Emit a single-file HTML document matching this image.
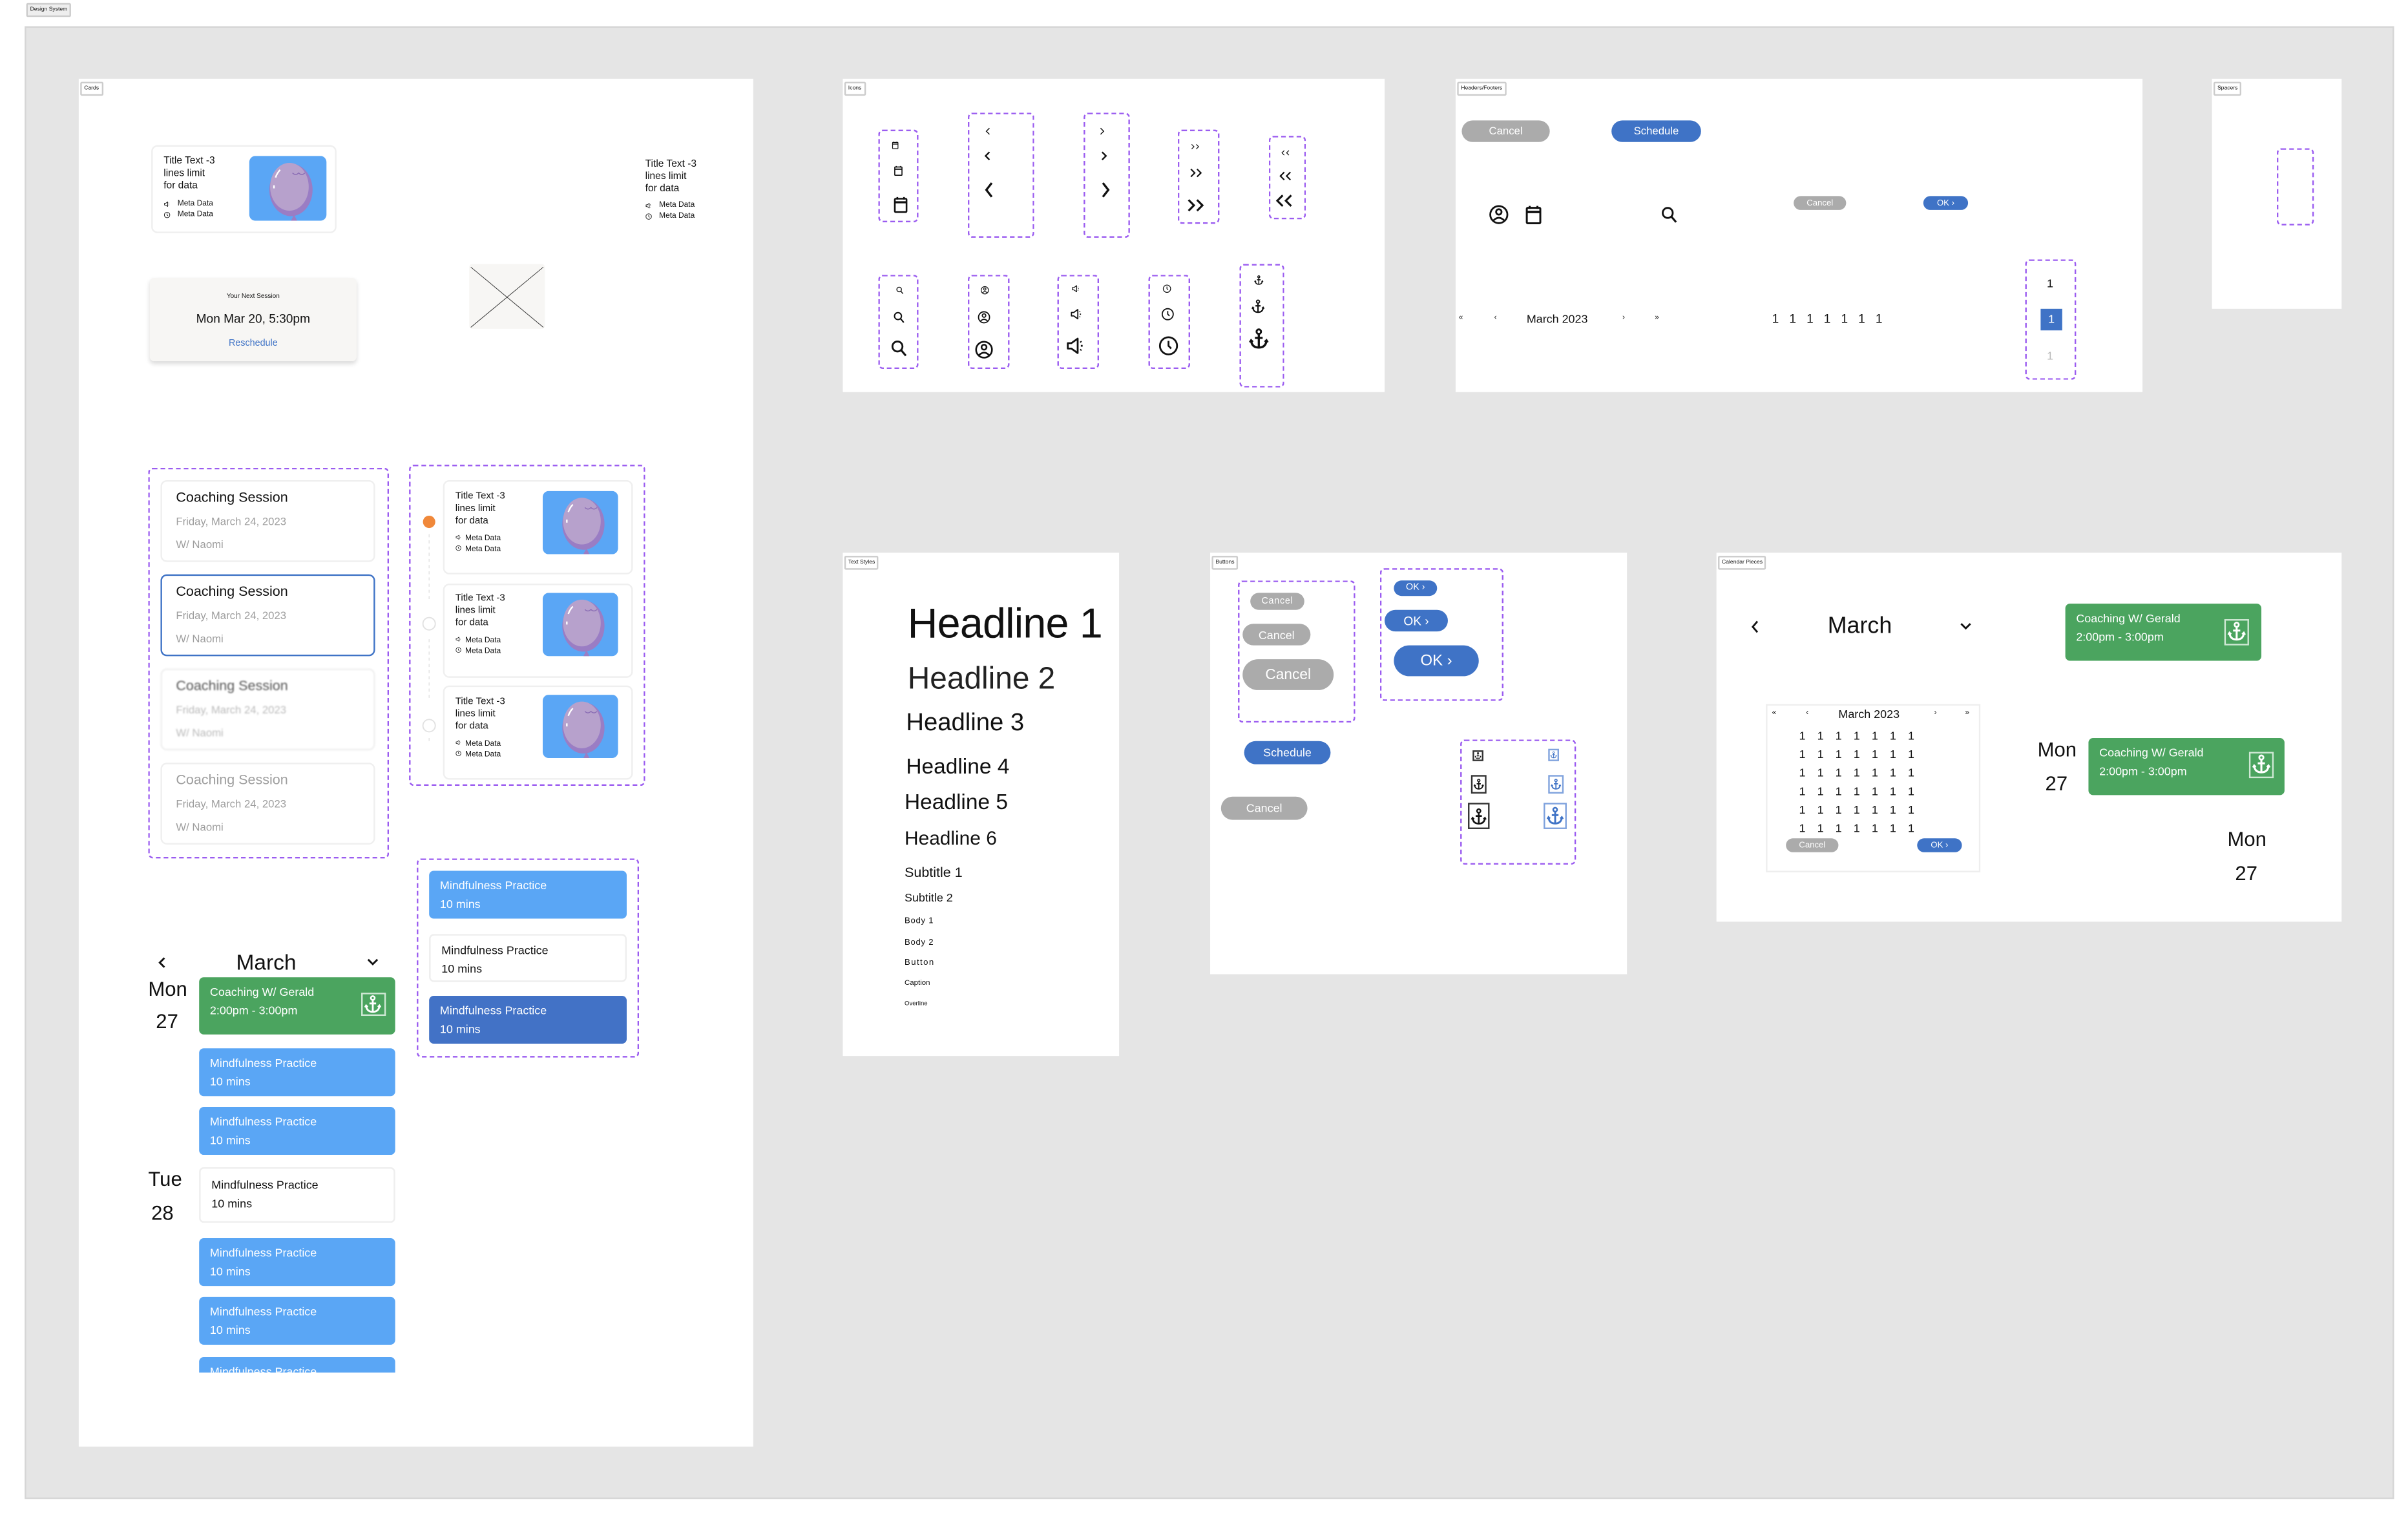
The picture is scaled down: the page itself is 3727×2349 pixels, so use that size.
<!DOCTYPE html>
<html><head><meta charset="utf-8">
<style>
*{box-sizing:border-box;margin:0;padding:0}
html,body{width:3727px;height:2349px;overflow:hidden;background:#fff}
#s{position:absolute;left:0;top:0;width:1560px;height:983px;transform:scale(2.3891);transform-origin:0 0;font-family:"Liberation Sans",sans-serif;color:#111}
.a{position:absolute;white-space:nowrap;line-height:1}
.p{position:absolute;background:#fff}
.d{position:absolute;border:0.8px dashed #9b5cf0;border-radius:3px}
.lab{position:absolute;font-size:3.6px;padding:1.5px 1.5px;border:0.4px solid #ccc;background:#fff;border-radius:1px;line-height:1}
.pill{position:absolute;border-radius:20px;color:#fff;text-align:center;white-space:nowrap;display:flex;align-items:center;justify-content:center}
.g{background:#ababab}.b{background:#3f73c6}
.card{position:absolute;background:#fff;border:0.6px solid #efefef;border-radius:4px}
.mp{position:absolute;border-radius:3px;font-size:7.5px;line-height:12px;padding:4px 7px;color:#fff;background:#5aa6f5;overflow:hidden}
.gr{position:absolute;background:#4ba45f;border-radius:3px;color:#fff;font-size:7.5px;line-height:12px;padding:4px 7px}
svg{position:absolute;overflow:visible}
</style></head><body>
<svg width="0" height="0" style="position:absolute">
<defs>
<symbol id="cal" viewBox="0 0 24 24"><rect x="5" y="5" width="14" height="16" rx="1" fill="none" stroke="currentColor" stroke-width="2"/><rect x="5" y="8" width="14" height="2.5" fill="currentColor"/><path d="M8 3v3M16 3v3" stroke="currentColor" stroke-width="2"/></symbol>
<symbol id="srch" viewBox="0 0 24 24"><circle cx="10" cy="10" r="6" fill="none" stroke="currentColor" stroke-width="2.2"/><path d="M14.5 14.5L20 21" stroke="currentColor" stroke-width="2.4"/></symbol>
<symbol id="usr" viewBox="0 0 24 24"><circle cx="12" cy="12" r="9.5" fill="none" stroke="currentColor" stroke-width="2"/><circle cx="12" cy="9" r="3" fill="none" stroke="currentColor" stroke-width="2"/><path d="M6 18.5Q12 12.5 18 18.5" fill="none" stroke="currentColor" stroke-width="2"/></symbol>
<symbol id="spk" viewBox="0 0 24 24"><path d="M3 9h4l7-5v16l-7-5H3z" fill="none" stroke="currentColor" stroke-width="2" stroke-linejoin="round"/><path d="M17 7l1 1M17.5 12h2M17 17l1-1" stroke="currentColor" stroke-width="2"/></symbol>
<symbol id="clk" viewBox="0 0 24 24"><circle cx="12" cy="12" r="9.5" fill="none" stroke="currentColor" stroke-width="2"/><path d="M12 6.5v5.5l3 3" fill="none" stroke="currentColor" stroke-width="2"/></symbol>
<symbol id="anc" viewBox="0 0 24 24"><circle cx="12" cy="4.5" r="2.3" fill="none" stroke="currentColor" stroke-width="2"/><path d="M12 7v14M8 11h8M4 14Q5 21 12 21Q19 21 20 14" fill="none" stroke="currentColor" stroke-width="2.2"/><path d="M2.5 15.5L4 13l2 2M21.5 15.5L20 13l-2 2" fill="none" stroke="currentColor" stroke-width="1.6"/></symbol>
<symbol id="bal" viewBox="0 0 50 42"><rect width="50" height="42" rx="4" fill="#5aa6f5"/><ellipse cx="27" cy="22" rx="14" ry="17" fill="#9a7dc4"/><ellipse cx="26" cy="20" rx="12.5" ry="15.5" fill="#b7a1cc"/><path d="M29 38l-2 4h4z" fill="#9a7dc4"/><path d="M17 14q1-3 3-5M16 19v2" stroke="#fff" stroke-width="1" fill="none"/><path d="M28 11q2 2 4 0q2 2 4 0" stroke="#8a6db4" stroke-width="0.6" fill="none"/></symbol>
</defs></svg>

<div id="s">
<div class="lab" style="left:17px;top:2px;background:#eee;border-color:#ccc">Design System</div>
<div class="p" style="left:16px;top:17px;width:1535px;height:954px;background:#e5e5e5;border:0.5px solid #d6d6d6"></div>

<!-- CARDS -->
<div class="p" style="left:51px;top:51px;width:437px;height:886px"></div>
<div class="lab" style="left:52px;top:53px">Cards</div>

<div class="card" style="left:98px;top:94px;width:120px;height:57px"></div>
<div class="a" style="left:106px;top:101px;font-size:6.5px;line-height:8.2px;white-space:normal;width:50px">Title Text -3<br>lines limit<br>for data</div>
<svg style="left:106px;top:130px" width="4.5" height="4.5" color="#111"><use href="#spk"/></svg>
<div class="a" style="left:115px;top:130px;font-size:5px">Meta Data</div>
<svg style="left:106px;top:136.5px" width="4.5" height="4.5" color="#111"><use href="#clk"/></svg>
<div class="a" style="left:115px;top:137px;font-size:5px">Meta Data</div>
<svg style="left:161px;top:101px" width="51" height="42"><use href="#bal"/></svg>

<div class="a" style="left:418px;top:103px;font-size:6.5px;line-height:8.2px">Title Text -3<br>lines limit<br>for data</div>
<svg style="left:418px;top:131px" width="4.5" height="4.5" color="#111"><use href="#spk"/></svg>
<div class="a" style="left:427px;top:131px;font-size:5px">Meta Data</div>
<svg style="left:418px;top:137.5px" width="4.5" height="4.5" color="#111"><use href="#clk"/></svg>
<div class="a" style="left:427px;top:138px;font-size:5px">Meta Data</div>

<div class="a" style="left:97px;top:180px;width:134px;height:54px;background:#f7f6f4;border-radius:3px;box-shadow:0 1.5px 3px rgba(0,0,0,.15)"></div>
<div class="a" style="left:97px;top:189.5px;width:134px;text-align:center;font-size:4.2px">Your Next Session</div>
<div class="a" style="left:97px;top:202.5px;width:134px;text-align:center;font-size:8px">Mon Mar 20, 5:30pm</div>
<div class="a" style="left:97px;top:219.5px;width:134px;text-align:center;font-size:6px;color:#3f73c6">Reschedule</div>

<div class="a" style="left:304px;top:171px;width:49px;height:42px;background:#f7f6f4;border-radius:2px"></div>
<svg style="left:304px;top:171px" width="49" height="42"><path d="M1 2L48 41M48 2L1 41" stroke="#333" stroke-width="0.4"/></svg>

<!-- session list -->
<div class="d" style="left:96px;top:303px;width:156px;height:253px"></div>
<div class="card" style="left:104px;top:311px;width:139px;height:53px"></div>
<div class="a" style="left:114px;top:318px;font-size:9px">Coaching Session</div>
<div class="a" style="left:114px;top:335px;font-size:7px;color:#9e9e9e">Friday, March 24, 2023</div>
<div class="a" style="left:114px;top:350px;font-size:7px;color:#9e9e9e">W/ Naomi</div>
<div class="card" style="left:104px;top:372px;width:139px;height:53px;border:1.1px solid #3f73c6"></div>
<div class="a" style="left:114px;top:379px;font-size:9px">Coaching Session</div>
<div class="a" style="left:114px;top:396px;font-size:7px;color:#9e9e9e">Friday, March 24, 2023</div>
<div class="a" style="left:114px;top:411px;font-size:7px;color:#9e9e9e">W/ Naomi</div>
<div class="card" style="left:104px;top:433px;width:139px;height:53px;filter:blur(0.5px)"></div>
<div class="a" style="left:114px;top:440px;font-size:9px;color:#555;filter:blur(0.4px)">Coaching Session</div>
<div class="a" style="left:114px;top:457px;font-size:7px;color:#bbb;filter:blur(0.4px)">Friday, March 24, 2023</div>
<div class="a" style="left:114px;top:472px;font-size:7px;color:#bbb;filter:blur(0.4px)">W/ Naomi</div>
<div class="card" style="left:104px;top:494px;width:139px;height:53px"></div>
<div class="a" style="left:114px;top:501px;font-size:9px;color:#9e9e9e">Coaching Session</div>
<div class="a" style="left:114px;top:518px;font-size:7px;color:#9e9e9e">Friday, March 24, 2023</div>
<div class="a" style="left:114px;top:533px;font-size:7px;color:#9e9e9e">W/ Naomi</div>

<!-- timeline -->
<div class="d" style="left:265px;top:301px;width:153px;height:208px"></div>
<svg style="left:270px;top:300px" width="20" height="210"><path d="M8 46V88M8 114V154M8 180V176" stroke="#ddd" stroke-width="0.5" stroke-dasharray="2 2"/><circle cx="8" cy="38" r="4" fill="#f0883a"/><circle cx="8" cy="104" r="4" fill="#fff" stroke="#e2e2e2" stroke-width="0.8"/><circle cx="8" cy="170" r="4" fill="#fff" stroke="#e2e2e2" stroke-width="0.8"/></svg>
<div class="card" style="left:287px;top:311px;width:123px;height:61px"></div>
<div class="card" style="left:287px;top:378px;width:123px;height:61px"></div>
<div class="card" style="left:287px;top:444px;width:123px;height:61px"></div>
<div class="a" style="left:295px;top:318px;font-size:6.3px;line-height:8px">Title Text -3<br>lines limit<br>for data</div>
<div class="a" style="left:295px;top:384px;font-size:6.3px;line-height:8px">Title Text -3<br>lines limit<br>for data</div>
<div class="a" style="left:295px;top:451px;font-size:6.3px;line-height:8px">Title Text -3<br>lines limit<br>for data</div>
<div class="a" style="left:295px;top:346px;font-size:5px;line-height:6.5px">&#x2003; Meta Data<br>&#x2003; Meta Data</div>
<div class="a" style="left:295px;top:412px;font-size:5px;line-height:6.5px">&#x2003; Meta Data<br>&#x2003; Meta Data</div>
<div class="a" style="left:295px;top:479px;font-size:5px;line-height:6.5px">&#x2003; Meta Data<br>&#x2003; Meta Data</div>
<svg style="left:295px;top:346px" width="4" height="4"><use href="#spk"/></svg><svg style="left:295px;top:352.5px" width="4" height="4"><use href="#clk"/></svg>
<svg style="left:295px;top:412px" width="4" height="4"><use href="#spk"/></svg><svg style="left:295px;top:418.5px" width="4" height="4"><use href="#clk"/></svg>
<svg style="left:295px;top:479px" width="4" height="4"><use href="#spk"/></svg><svg style="left:295px;top:485.5px" width="4" height="4"><use href="#clk"/></svg>
<svg style="left:351px;top:318px" width="50" height="41"><use href="#bal"/></svg>
<svg style="left:351px;top:384px" width="50" height="41"><use href="#bal"/></svg>
<svg style="left:351px;top:450px" width="50" height="41"><use href="#bal"/></svg>

<!-- mindfulness -->
<div class="d" style="left:270px;top:556px;width:144px;height:129px"></div>
<div class="mp" style="left:278px;top:564px;width:128px;height:31px">Mindfulness Practice<br>10 mins</div>
<div class="mp" style="left:278px;top:605px;width:128px;height:31px;background:#fff;color:#111;border:0.6px solid #eee">Mindfulness Practice<br>10 mins</div>
<div class="mp" style="left:278px;top:645px;width:128px;height:31px;background:#4272c6">Mindfulness Practice<br>10 mins</div>

<!-- calendar list -->
<svg style="left:101px;top:619px" width="8" height="8"><path d="M5.5 1.5L2.5 4.5L5.5 7.5" fill="none" stroke="#111" stroke-width="1.2"/></svg>
<div class="a" style="left:153px;top:616px;font-size:14px">March</div>
<svg style="left:237px;top:619px" width="9" height="8"><path d="M1.5 2.5L4.5 5.5L7.5 2.5" fill="none" stroke="#111" stroke-width="1.2"/></svg>
<div class="a" style="left:96px;top:634px;font-size:13px">Mon</div>
<div class="a" style="left:101px;top:655px;font-size:13px">27</div>
<div class="gr" style="left:129px;top:633px;width:127px;height:37px">Coaching W/ Gerald<br>2:00pm - 3:00pm</div>
<div class="a" style="left:234px;top:643px;width:16px;height:15px;border:0.5px solid #cfe8d4"></div>
<svg style="left:235px;top:644px" width="13" height="13" color="#fff"><use href="#anc"/></svg>
<div class="mp" style="left:129px;top:679px;width:127px;height:31px">Mindfulness Practice<br>10 mins</div>
<div class="mp" style="left:129px;top:717px;width:127px;height:31px">Mindfulness Practice<br>10 mins</div>
<div class="a" style="left:96px;top:757px;font-size:13px">Tue</div>
<div class="a" style="left:98px;top:779px;font-size:13px">28</div>
<div class="mp" style="left:129px;top:756px;width:127px;height:36px;background:#fff;color:#111;border:0.6px solid #eee;padding-top:5px">Mindfulness Practice<br>10 mins</div>
<div class="mp" style="left:129px;top:802px;width:127px;height:31px">Mindfulness Practice<br>10 mins</div>
<div class="mp" style="left:129px;top:840px;width:127px;height:31px">Mindfulness Practice<br>10 mins</div>
<div class="mp" style="left:129px;top:879px;width:127px;height:10px;border-radius:3px 3px 0 0">Mindfulness Practice</div>

<!-- ICONS -->
<div class="p" style="left:546px;top:51px;width:351px;height:203px"></div>
<div class="lab" style="left:547px;top:53px">Icons</div>
<div class="d" style="left:569px;top:84px;width:26px;height:60px"></div>
<svg style="left:577px;top:91px" width="6" height="6"><use href="#cal"/></svg>
<svg style="left:578px;top:106px" width="8" height="9"><use href="#cal"/></svg>
<svg style="left:577px;top:125px" width="13" height="15"><use href="#cal"/></svg>
<div class="d" style="left:627px;top:73px;width:43px;height:81px"></div>
<svg style="left:637px;top:82px" width="6" height="6"><path d="M4 1L2 3L4 5" fill="none" stroke="#111" stroke-width=".6"/></svg>
<svg style="left:636px;top:97px" width="8" height="8"><path d="M5 1.5L2.5 4L5 6.5" fill="none" stroke="#111" stroke-width="1"/></svg>
<svg style="left:636px;top:117px" width="10" height="12"><path d="M6.5 1.5L3 6L6.5 10.5" fill="none" stroke="#111" stroke-width="1.4"/></svg>
<div class="d" style="left:702px;top:73px;width:30px;height:81px"></div>
<svg style="left:711px;top:82px" width="6" height="6"><path d="M2 1L4 3L2 5" fill="none" stroke="#111" stroke-width=".6"/></svg>
<svg style="left:711px;top:97px" width="8" height="8"><path d="M3 1.5L5.5 4L3 6.5" fill="none" stroke="#111" stroke-width="1"/></svg>
<svg style="left:711px;top:117px" width="10" height="12"><path d="M3.5 1.5L7 6L3.5 10.5" fill="none" stroke="#111" stroke-width="1.4"/></svg>
<div class="d" style="left:763px;top:84px;width:27px;height:61px"></div>
<svg style="left:771px;top:92px" width="8" height="6"><path d="M1 1.5L2.5 3L1 4.5M4 1.5L5.5 3L4 4.5" fill="none" stroke="#111" stroke-width=".5"/></svg>
<svg style="left:770px;top:108px" width="10" height="8"><path d="M1.5 1.5L4 4L1.5 6.5M5.5 1.5L8 4L5.5 6.5" fill="none" stroke="#111" stroke-width=".9"/></svg>
<svg style="left:768px;top:128px" width="14" height="10"><path d="M2 1.5L5.5 5L2 8.5M7.5 1.5L11 5L7.5 8.5" fill="none" stroke="#111" stroke-width="1.3"/></svg>
<div class="d" style="left:822px;top:88px;width:24px;height:54px"></div>
<svg style="left:829px;top:96px" width="8" height="6"><path d="M3 1.5L1.5 3L3 4.5M6 1.5L4.5 3L6 4.5" fill="none" stroke="#111" stroke-width=".5"/></svg>
<svg style="left:828px;top:110px" width="10" height="8"><path d="M4 1.5L1.5 4L4 6.5M8 1.5L5.5 4L8 6.5" fill="none" stroke="#111" stroke-width=".9"/></svg>
<svg style="left:826px;top:125px" width="14" height="10"><path d="M5 1.5L1.5 5L5 8.5M10.5 1.5L7 5L10.5 8.5" fill="none" stroke="#111" stroke-width="1.3"/></svg>
<div class="d" style="left:569px;top:178px;width:26px;height:61px"></div>
<svg style="left:580px;top:185px" width="6" height="6"><use href="#srch"/></svg>
<svg style="left:578px;top:201px" width="9" height="9"><use href="#srch"/></svg>
<svg style="left:576px;top:219px" width="13" height="13"><use href="#srch"/></svg>
<div class="d" style="left:627px;top:178px;width:27px;height:61px"></div>
<svg style="left:635px;top:185px" width="6" height="6"><use href="#usr"/></svg>
<svg style="left:633px;top:201px" width="9" height="9"><use href="#usr"/></svg>
<svg style="left:631px;top:220px" width="13" height="13"><use href="#usr"/></svg>
<div class="d" style="left:685px;top:178px;width:27px;height:61px"></div>
<svg style="left:694px;top:184px" width="6" height="6"><use href="#spk"/></svg>
<svg style="left:693px;top:199px" width="9" height="9"><use href="#spk"/></svg>
<svg style="left:690px;top:217px" width="14" height="14"><use href="#spk"/></svg>
<div class="d" style="left:744px;top:178px;width:27px;height:61px"></div>
<svg style="left:753px;top:184px" width="6" height="6"><use href="#clk"/></svg>
<svg style="left:752px;top:199px" width="9" height="9"><use href="#clk"/></svg>
<svg style="left:750px;top:217px" width="14" height="14"><use href="#clk"/></svg>
<div class="d" style="left:803px;top:171px;width:29px;height:80px"></div>
<svg style="left:812px;top:178px" width="7" height="7"><use href="#anc"/></svg>
<svg style="left:810px;top:193px" width="10" height="11"><use href="#anc"/></svg>
<svg style="left:808px;top:212px" width="15" height="15"><use href="#anc"/></svg>

<!-- HEADERS/FOOTERS -->
<div class="p" style="left:943px;top:51px;width:445px;height:203px"></div>
<div class="lab" style="left:944px;top:53px">Headers/Footers</div>
<div class="pill g" style="left:947px;top:78px;width:57px;height:14px;font-size:7px">Cancel</div>
<div class="pill b" style="left:1044px;top:78px;width:58px;height:14px;font-size:7px">Schedule</div>
<svg style="left:964px;top:132px" width="14" height="14"><use href="#usr"/></svg>
<svg style="left:986px;top:131px" width="15" height="16"><use href="#cal"/></svg>
<svg style="left:1075px;top:132px" width="13" height="14"><use href="#srch"/></svg>
<div class="pill g" style="left:1162px;top:127px;width:34px;height:9px;font-size:5.5px">Cancel</div>
<div class="pill b" style="left:1246px;top:127px;width:29px;height:9px;font-size:5.5px">OK ›</div>
<div class="a" style="left:945px;top:204px;font-size:5px">«</div>
<div class="a" style="left:968px;top:204px;font-size:5px">‹</div>
<div class="a" style="left:989px;top:203px;font-size:7.5px">March 2023</div>
<div class="a" style="left:1051px;top:204px;font-size:5px">›</div>
<div class="a" style="left:1072px;top:204px;font-size:5px">»</div>
<div class="a" style="left:1148px;top:203px;font-size:8px;word-spacing:4.5px">1 1 1 1 1 1 1</div>
<div class="d" style="left:1312px;top:168px;width:33px;height:78px"></div>
<div class="a" style="left:1326px;top:180px;font-size:7.5px">1</div>
<div class="a" style="left:1322px;top:200px;width:14px;height:14px;background:#3f73c6;color:#fff;font-size:7.5px;text-align:center;line-height:14px">1</div>
<div class="a" style="left:1326px;top:227px;font-size:7.5px;color:#bbb">1</div>

<!-- SPACERS -->
<div class="p" style="left:1433px;top:51px;width:84px;height:149px"></div>
<div class="lab" style="left:1434px;top:53px">Spacers</div>
<div class="d" style="left:1475px;top:96px;width:24px;height:50px"></div>

<!-- TEXT STYLES -->
<div class="p" style="left:546px;top:358px;width:179px;height:326px"></div>
<div class="lab" style="left:547px;top:360px">Text Styles</div>
<div class="a" style="left:588px;top:391px;font-size:27px;font-weight:300;letter-spacing:-0.3px">Headline 1</div>
<div class="a" style="left:588px;top:430px;font-size:20px;color:#222">Headline 2</div>
<div class="a" style="left:587px;top:461px;font-size:16px">Headline 3</div>
<div class="a" style="left:587px;top:489px;font-size:14px">Headline 4</div>
<div class="a" style="left:586px;top:512px;font-size:14px">Headline 5</div>
<div class="a" style="left:586px;top:537px;font-size:12.5px">Headline 6</div>
<div class="a" style="left:586px;top:560.5px;font-size:9px">Subtitle 1</div>
<div class="a" style="left:586px;top:577.5px;font-size:7.5px">Subtitle 2</div>
<div class="a" style="left:586px;top:595px;font-size:5.5px;letter-spacing:.3px">Body 1</div>
<div class="a" style="left:586px;top:609px;font-size:5.5px;letter-spacing:.3px">Body 2</div>
<div class="a" style="left:586px;top:622px;font-size:5.5px;letter-spacing:.6px">Button</div>
<div class="a" style="left:586px;top:635.5px;font-size:4.8px">Caption</div>
<div class="a" style="left:586px;top:648px;font-size:4px">Overline</div>

<!-- BUTTONS -->
<div class="p" style="left:784px;top:358px;width:270px;height:273px"></div>
<div class="lab" style="left:785px;top:360px">Buttons</div>
<div class="d" style="left:802px;top:376px;width:76px;height:92px"></div>
<div class="pill g" style="left:810px;top:384px;width:35px;height:11px;font-size:6px;letter-spacing:.3px">Cancel</div>
<div class="pill g" style="left:805px;top:404px;width:44px;height:14px;font-size:7.5px">Cancel</div>
<div class="pill g" style="left:805px;top:427px;width:59px;height:20px;font-size:9.5px">Cancel</div>
<div class="d" style="left:894px;top:368px;width:80px;height:86px"></div>
<div class="pill b" style="left:903px;top:376px;width:28px;height:10px;font-size:6px">OK ›</div>
<div class="pill b" style="left:897px;top:395px;width:41px;height:14px;font-size:8px">OK ›</div>
<div class="pill b" style="left:903px;top:418px;width:55px;height:20px;font-size:10px">OK ›</div>
<div class="pill b" style="left:806px;top:480px;width:56px;height:15px;font-size:7.5px">Schedule</div>
<div class="pill g" style="left:791px;top:516px;width:56px;height:15px;font-size:7.5px">Cancel</div>
<div class="d" style="left:946px;top:479px;width:75px;height:81px"></div>
<div class="a" style="left:954px;top:486px;width:7px;height:7px;border:0.4px solid #333"></div><svg style="left:955px;top:487px" width="5" height="5"><use href="#anc"/></svg>
<div class="a" style="left:953px;top:502px;width:10px;height:12px;border:0.4px solid #333"></div><svg style="left:954px;top:503px" width="8" height="10"><use href="#anc"/></svg>
<div class="a" style="left:951px;top:520px;width:14px;height:17px;border:0.4px solid #333"></div><svg style="left:952px;top:522px" width="12" height="14"><use href="#anc"/></svg>
<div class="a" style="left:1003px;top:485px;width:7px;height:8px;border:0.4px solid #7fa2dd"></div><svg style="left:1004px;top:486px" width="5" height="6" color="#3f73c6"><use href="#anc"/></svg>
<div class="a" style="left:1003px;top:502px;width:10px;height:12px;border:0.4px solid #7fa2dd"></div><svg style="left:1004px;top:503px" width="8" height="10" color="#3f73c6"><use href="#anc"/></svg>
<div class="a" style="left:1000px;top:520px;width:15px;height:17px;border:0.4px solid #7fa2dd"></div><svg style="left:1001px;top:521px" width="13" height="15" color="#3f73c6"><use href="#anc"/></svg>

<!-- CALENDAR PIECES -->
<div class="p" style="left:1112px;top:358px;width:405px;height:239px"></div>
<div class="lab" style="left:1113px;top:360px">Calendar Pieces</div>
<svg style="left:1133px;top:401px" width="8" height="10"><path d="M5.5 1.5L2.5 5L5.5 8.5" fill="none" stroke="#111" stroke-width="1.2"/></svg>
<div class="a" style="left:1184px;top:398px;font-size:15px">March</div>
<svg style="left:1269px;top:402px" width="9" height="8"><path d="M1.5 2L4.5 5L7.5 2" fill="none" stroke="#111" stroke-width="1.2"/></svg>
<div class="gr" style="left:1338px;top:391px;width:127px;height:37px">Coaching W/ Gerald<br>2:00pm - 3:00pm</div>
<div class="a" style="left:1441px;top:401px;width:16px;height:17px;border:0.5px solid #cfe8d4"></div>
<svg style="left:1442px;top:402px" width="14" height="14" color="#fff"><use href="#anc"/></svg>

<div class="a" style="left:1144px;top:456px;width:139px;height:109px;border:0.6px solid #eee"></div>
<div class="a" style="left:1148px;top:460px;font-size:5px">«</div>
<div class="a" style="left:1170px;top:460px;font-size:5px">‹</div>
<div class="a" style="left:1191px;top:459px;font-size:7.5px">March 2023</div>
<div class="a" style="left:1253px;top:460px;font-size:5px">›</div>
<div class="a" style="left:1273px;top:460px;font-size:5px">»</div>
<div class="a" style="left:1165.5px;top:471px;font-size:7.5px;line-height:12px;word-spacing:5.5px">1 1 1 1 1 1 1<br>1 1 1 1 1 1 1<br>1 1 1 1 1 1 1<br>1 1 1 1 1 1 1<br>1 1 1 1 1 1 1<br>1 1 1 1 1 1 1</div>
<div class="pill g" style="left:1157px;top:543px;width:34px;height:9px;font-size:5.5px">Cancel</div>
<div class="pill b" style="left:1242px;top:543px;width:29px;height:9px;font-size:5.5px">OK ›</div>

<div class="a" style="left:1320px;top:479px;font-size:13px">Mon</div>
<div class="a" style="left:1325px;top:501px;font-size:13px">27</div>
<div class="gr" style="left:1353px;top:478px;width:127px;height:37px">Coaching W/ Gerald<br>2:00pm - 3:00pm</div>
<div class="a" style="left:1457px;top:487px;width:16px;height:17px;border:0.5px solid #cfe8d4"></div>
<svg style="left:1458px;top:488px" width="14" height="14" color="#fff"><use href="#anc"/></svg>
<div class="a" style="left:1443px;top:537px;font-size:13px">Mon</div>
<div class="a" style="left:1448px;top:559px;font-size:13px">27</div>
</div>
</body></html>
